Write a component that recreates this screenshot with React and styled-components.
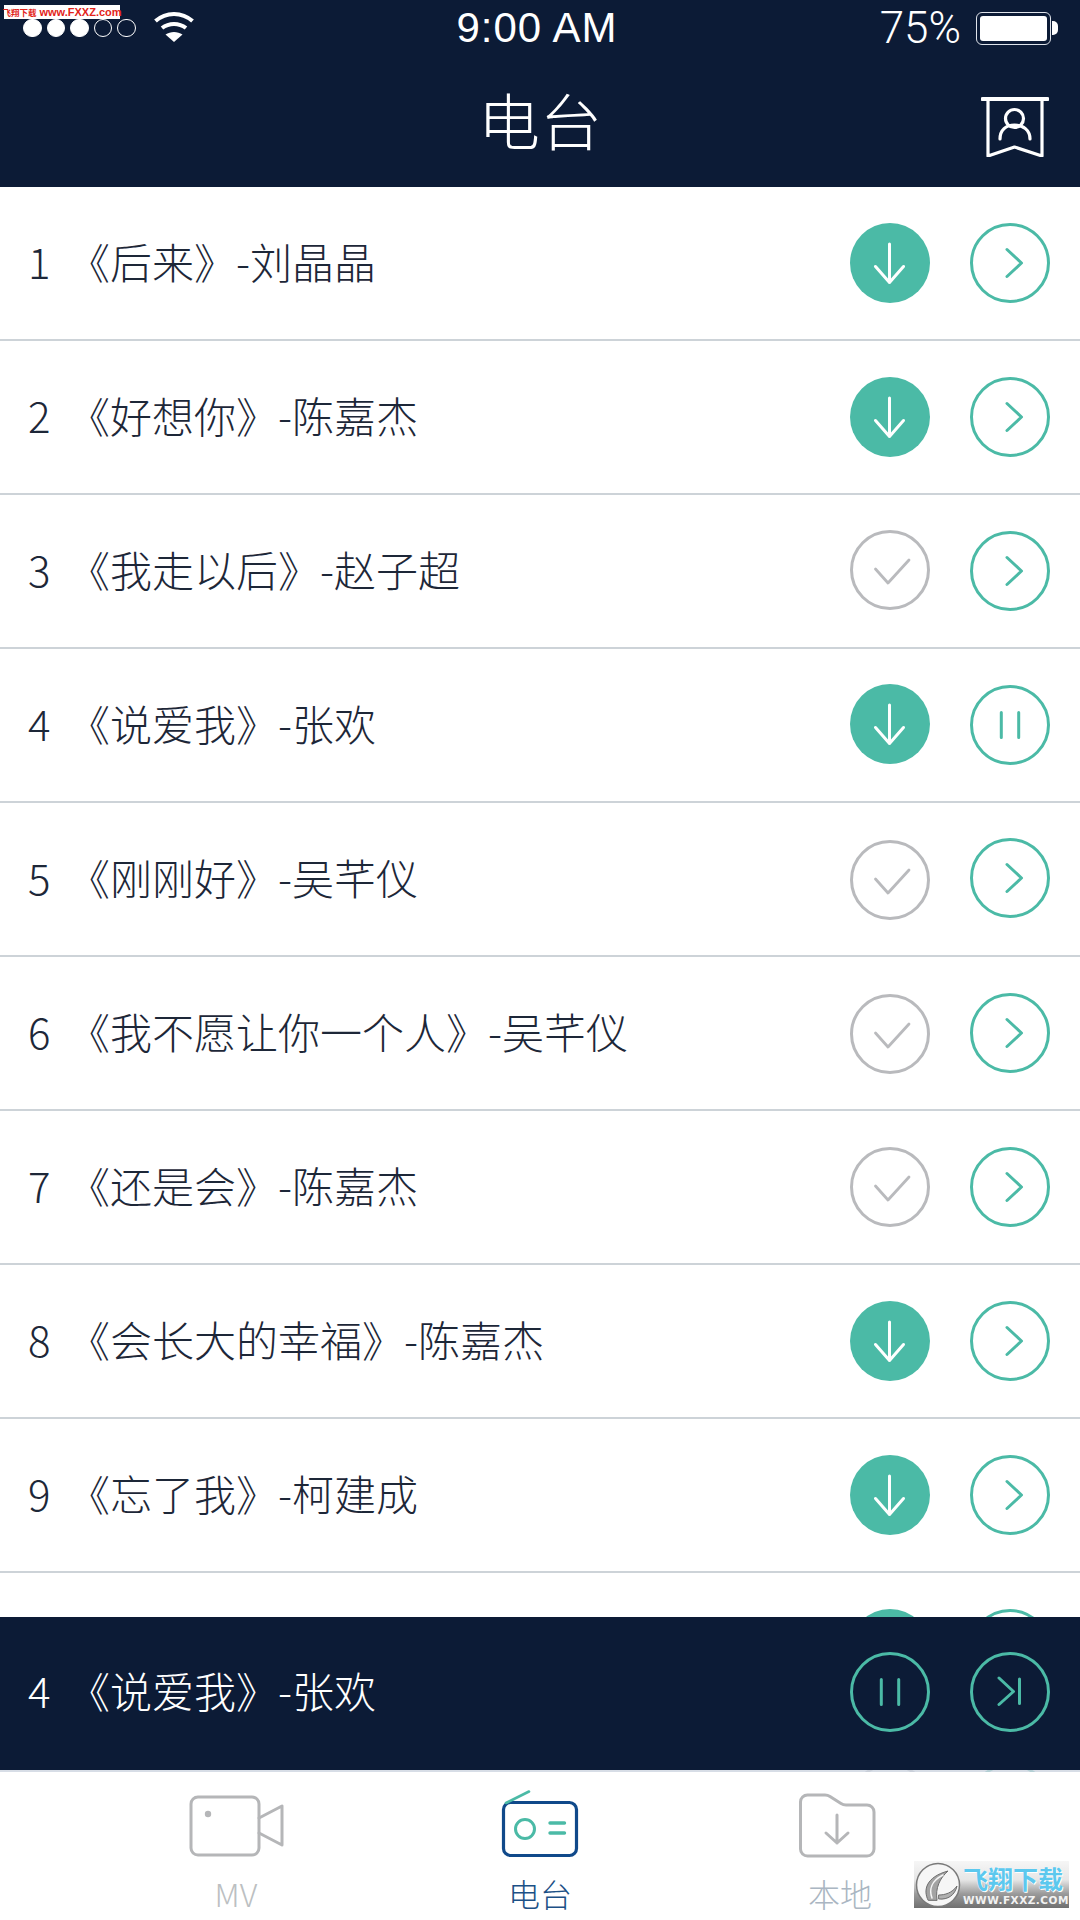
import React from 'react';
import styled, { createGlobalStyle } from 'styled-components';

const NAVY = '#0c1b36';
const TEAL = '#4bbaa6';
const CJK = '"Noto Sans CJK SC", "Noto Sans", sans-serif';

const Reset = createGlobalStyle`
  html, body { margin: 0; padding: 0; background: #fff; }
  * { box-sizing: border-box; }
`;

const Screen = styled.div`
  width: 1080px;
  height: 1920px;
  display: flex;
  flex-direction: column;
  overflow: hidden;
  position: relative;
  font-family: ${CJK};
  background: #fff;
`;

const Header = styled.header`
  height: 187px;
  flex: none;
  background: ${NAVY};
  color: #fff;
  display: flex;
  flex-direction: column;
`;

const StatusBar = styled.div`
  height: 56px;
  padding: 0 29px 0 23px;
  display: grid;
  grid-template-columns: 1fr auto 1fr;
  align-items: center;
`;

const StatusLeft = styled.div`
  display: flex;
  align-items: center;
  gap: 5px;
`;

const Dot = styled.span`
  width: 18.6px;
  height: 18.6px;
  border-radius: 50%;
  border: 1.2px solid #fff;
  background: ${(p) => (p.$on ? '#fff' : 'transparent')};
`;

const WifiIcon = styled.svg`
  width: 40px;
  height: 32px;
  margin-left: 13px;
  margin-top: -2px;
`;

const Clock = styled.span`
  font: 400 42px/1 "Liberation Sans", sans-serif;
  letter-spacing: 1px;
`;

const StatusRight = styled.div`
  display: flex;
  align-items: center;
  justify-content: flex-end;
  gap: 15px;
`;

const Percent = styled.span`
  font: 300 44px/1 Roboto, sans-serif;
`;

const Battery = styled.span`
  width: 75px;
  height: 33px;
  border: 1.5px solid #dfe3ea;
  border-radius: 6px;
  padding: 3px;
  position: relative;
  display: block;
  &::before {
    content: '';
    display: block;
    height: 100%;
    background: #fff;
    border-radius: 3px;
  }
  &::after {
    content: '';
    position: absolute;
    right: -8px;
    top: 8px;
    width: 6px;
    height: 14px;
    background: #fff;
    border-radius: 0 5px 5px 0;
  }
`;

const TitleRow = styled.div`
  flex: 1;
  display: flex;
  align-items: center;
  justify-content: center;
  padding-bottom: 6px;
  position: relative;
`;

const Title = styled.h1`
  margin: 0;
  font: 200 62px/1 ${CJK};
`;

const BookmarkIcon = styled.svg`
  position: absolute;
  right: 31px;
  top: 41px;
  width: 68px;
  height: 60px;
`;

const Body = styled.main`
  height: 1585px;
  flex: none;
  position: relative;
  overflow: hidden;
  background: #fff;
`;

const Row = styled.div`
  height: 154px;
  padding: 0 30px 0 28px;
  border-bottom: 2px solid #cdd3d8;
  display: flex;
  align-items: center;
`;

const Num = styled.span`
  width: 40px;
  flex: none;
  margin-top: -5px;
  font: 200 42px/1 ${CJK};
  color: ${(p) => (p.$light ? '#fff' : '#1d2738')};
`;

const Song = styled.span`
  flex: 1;
  margin-top: -5px;
  font: 200 42px/1 ${CJK};
  color: ${(p) => (p.$light ? '#fff' : '#1d2738')};
  white-space: nowrap;
`;

const Actions = styled.div`
  display: flex;
  align-items: flex-start;
  gap: 40px;
  flex: none;
  margin-left: auto;
`;

const Round = styled.svg`
  width: 80px;
  height: 80px;
  display: block;
  flex: none;
  margin-top: ${(p) => p.$dy || 0}px;
`;

const Player = styled.section`
  position: absolute;
  left: 0;
  right: 0;
  top: 1430px;
  height: 153px;
  background: ${NAVY};
  box-shadow: 0 2px 0 rgba(205, 212, 224, 0.8);
  padding: 0 30px 3px 28px;
  display: flex;
  align-items: center;
`;

const Tabs = styled.nav`
  flex: 1;
  background: #fff;
  display: grid;
  grid-template-columns: 304px 304px 296px;
  padding-left: 84px;
`;

const Tab = styled.div`
  display: flex;
  flex-direction: column;
  align-items: center;
`;

const TabIconSlot = styled.div`
  height: 86px;
  display: flex;
  align-items: flex-end;
  margin-left: ${(p) => p.$shift || 0}px;
`;

const TabLabel = styled.span`
  margin-top: 16px;
  font: 200 32px/1.2 ${CJK};
  color: ${(p) => p.$color};
`;

const SiteTag = styled.div`
  position: absolute;
  left: 4px;
  top: 5px;
  width: 116px;
  height: 14px;
  background: #fff;
  color: #e2231a;
  display: flex;
  align-items: center;
  justify-content: center;
  gap: 3px;
  font: 700 11px/14px "Liberation Sans", sans-serif;
  white-space: nowrap;
  z-index: 3;
`;

const SiteTagName = styled.span`
  font: 700 8.5px/14px ${CJK};
`;

const SiteBadge = styled.div`
  position: absolute;
  left: 914px;
  top: 1861px;
  width: 155px;
  height: 47px;
  background: linear-gradient(#f6f6f6 0%, #e6e6e6 40%, #9a9a9a 70%, #707070 100%);
  display: flex;
  align-items: center;
  padding-left: 1px;
  z-index: 3;
`;

const BadgeLogo = styled.svg`
  width: 46px;
  height: 46px;
  flex: none;
`;

const BadgeText = styled.div`
  flex: 1;
  display: flex;
  flex-direction: column;
  align-items: flex-start;
  margin-left: 2px;
`;

const BadgeName = styled.span`
  font: 700 25px/30px ${CJK};
  color: #5cc8ee;
  height: 31px;
  text-shadow: 0 0 1px #fff, 1px 1px 0 #fff;
`;

const BadgeUrl = styled.span`
  font: 700 10.5px/12px "DejaVu Sans", sans-serif;
  color: #f2f2f2;
  letter-spacing: 0.5px;
`;

function Circle({ color = TEAL, filled, dy, children }) {
  return (
    <Round $dy={dy} viewBox="0 0 80 80" fill="none" strokeLinecap="round" strokeLinejoin="round">
      <circle cx="40" cy="40" r={filled ? 40 : 38.5} fill={filled ? color : 'none'} stroke={filled ? 'none' : color} strokeWidth="3" />
      {children}
    </Round>
  );
}

const DownloadBtn = ({ dy }) => (
  <Circle filled dy={dy}>
    <path d="M39.500 21V59.500M25.500 43.500 39.500 59.500 53.500 43.500" stroke="#fff" strokeWidth="3" />
  </Circle>
);

const DoneBtn = ({ dy }) => (
  <Circle color="#b9babd" dy={dy}>
    <path d="M25.500 39 38 53 59 30" stroke="#b9babd" strokeWidth="2.800" />
  </Circle>
);

const OpenBtn = () => (
  <Circle>
    <path d="M37 26.500 51.500 40 37 53.500" stroke={TEAL} strokeWidth="3" />
  </Circle>
);

const PauseBtn = () => (
  <Circle>
    <path d="M31.300 27.500V52.500M48.700 27.500V52.500" stroke={TEAL} strokeWidth="3" />
  </Circle>
);

const NextBtn = () => (
  <Circle>
    <path d="M29 26 43.500 39.500 29 52.500M49.500 27V51.500" stroke={TEAL} strokeWidth="3" />
  </Circle>
);

// Rows ten and eleven only show their buttons above and below the player bar.
const songs = [
  { name: '《后来》-刘晶晶', state: 'get' },
  { name: '《好想你》-陈嘉杰', state: 'get' },
  { name: '《我走以后》-赵子超', state: 'done', dy: -1 },
  { name: '《说爱我》-张欢', state: 'get', playing: true, dy: -1 },
  { name: '《刚刚好》-吴芊仪', state: 'done', dy: 2 },
  { name: '《我不愿让你一个人》-吴芊仪', state: 'done', dy: 1 },
  { name: '《还是会》-陈嘉杰', state: 'done' },
  { name: '《会长大的幸福》-陈嘉杰', state: 'get' },
  { name: '《忘了我》-柯建成', state: 'get' },
  { state: 'get' },
  { state: 'done' },
];

export default function App() {
  return (
    <Screen>
      <Reset />
      <SiteTag>
        <SiteTagName>飞翔下载</SiteTagName>
        www.FXXZ.com
      </SiteTag>
      <Header>
        <StatusBar>
          <StatusLeft>
            <Dot $on /><Dot $on /><Dot $on /><Dot /><Dot />
            <WifiIcon viewBox="0 0 40 32" fill="none" stroke="#fff" strokeWidth="4">
              <path d="M1.500 10C12 .5 28 .5 38.500 10" />
              <path d="M8 17c7-5.500 17-5.500 24 0" />
              <path d="M20 31 11.500 23.500c5-3.500 12-3.500 17 0Z" fill="#fff" stroke="none" />
            </WifiIcon>
          </StatusLeft>
          <Clock>9:00 AM</Clock>
          <StatusRight>
            <Percent>75%</Percent>
            <Battery />
          </StatusRight>
        </StatusBar>
        <TitleRow>
          <Title>电台</Title>
          <BookmarkIcon viewBox="0 0 68 60" fill="none" stroke="#fff" strokeWidth="3.200" strokeLinecap="round" strokeLinejoin="round">
            <path d="M1.500 2H66.500" strokeWidth="4" />
            <path d="M7 2V59L33.500 50 61 59V2" />
            <circle cx="33.500" cy="21.500" r="9" />
            <path d="M19 42c0-9 6-14 14.500-14S49 33 49 42" />
          </BookmarkIcon>
        </TitleRow>
      </Header>

      <Body>
        {songs.map((song, i) => (
          <Row key={i}>
            {song.name && <Num>{i + 1}</Num>}
            {song.name && <Song>{song.name}</Song>}
            <Actions>
              {song.state === 'get' ? <DownloadBtn dy={song.dy} /> : <DoneBtn dy={song.dy} />}
              {song.playing ? <PauseBtn /> : <OpenBtn />}
            </Actions>
          </Row>
        ))}
        <Player>
          <Num $light>4</Num>
          <Song $light>《说爱我》-张欢</Song>
          <Actions>
            <PauseBtn />
            <NextBtn />
          </Actions>
        </Player>
      </Body>

      <Tabs>
        <Tab>
          <TabIconSlot>
            <svg width="95" height="62" viewBox="0 0 95 62" fill="none" stroke="#b5b6b8" strokeWidth="3" strokeLinejoin="round" strokeLinecap="round" style={{ marginBottom: 1 }}>
              <rect x="2" y="2" width="68" height="58" rx="7" />
              <path d="M70 23 93 11V50L70 38" />
              <circle cx="19" cy="19" r="3.200" fill="#b5b6b8" stroke="none" />
            </svg>
          </TabIconSlot>
          <TabLabel $color="#bcbfc2">MV</TabLabel>
        </Tab>
        <Tab>
          <TabIconSlot>
            <svg width="78" height="68" viewBox="0 0 78 68" fill="none" strokeLinecap="round">
              <rect x="2.500" y="12.500" width="73" height="53" rx="7" stroke="#10498a" strokeWidth="3.200" />
              <path d="M5 13 28 1.500" stroke={TEAL} strokeWidth="2.600" />
              <circle cx="24" cy="39" r="9.500" stroke={TEAL} strokeWidth="3" />
              <path d="M49 33H63.500M49 43H63.500" stroke={TEAL} strokeWidth="3.400" />
            </svg>
          </TabIconSlot>
          <TabLabel $color="#1c5086">电台</TabLabel>
        </Tab>
        <Tab>
          <TabIconSlot $shift={-6}>
            <svg width="78" height="65" viewBox="0 0 78 65" fill="none" stroke="#b5b6b8" strokeWidth="3" strokeLinejoin="round" strokeLinecap="round">
              <path d="M2.500 9a7 7 0 0 1 7-7H27c2 0 3.500.5 5 1.500L43 10.500c1.500 1 3 1.500 5 1.500H69a7 7 0 0 1 7 7V56a7 7 0 0 1-7 7H9.500a7 7 0 0 1-7-7Z" />
              <path d="M39 22V50M28 40 39 50 50 40" />
            </svg>
          </TabIconSlot>
          <TabLabel $color="#aab6c2">本地</TabLabel>
        </Tab>
      </Tabs>

      <SiteBadge>
        <BadgeLogo viewBox="0 0 46 46" fill="none" strokeLinecap="round">
          <circle cx="23" cy="23" r="21.500" fill="#f6f6f6" stroke="#7a7a7a" strokeWidth="1.500" />
          <path d="M13 38C8 28 11 15 33 9 25 16 20 26 22 38Z" fill="#a3a3a3" stroke="#6e6e6e" strokeWidth="1" />
          <path d="M17 36C14 28 16 19 28 13" stroke="#f6f6f6" strokeWidth="1.500" />
          <path d="M24 33c6 0 13-2 18-9-2 9-9 14-18 13Z" fill="#b0b0b0" stroke="#6e6e6e" strokeWidth="1" />
        </BadgeLogo>
        <BadgeText>
          <BadgeName>飞翔下载</BadgeName>
          <BadgeUrl>WWW.FXXZ.COM</BadgeUrl>
        </BadgeText>
      </SiteBadge>
    </Screen>
  );
}
